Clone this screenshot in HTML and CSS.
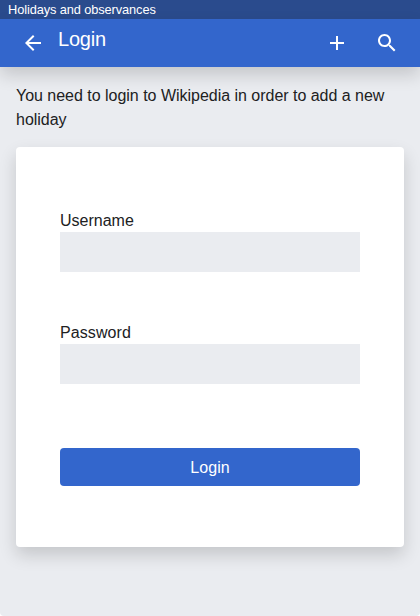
FILE: index.html
```html
<!DOCTYPE html>
<html lang="en">
<head>
<meta charset="utf-8">
<title>Login</title>
<link rel="stylesheet" href="styles.css">
</head>
<body>
<div class="app">
<div class="status-bar">Holidays and observances</div>
<header class="toolbar">
  <button class="icon-button" aria-label="Back"><svg viewBox="0 0 24 24"><path d="M20 11H7.83l5.59-5.59L12 4l-8 8 8 8 1.41-1.41L7.83 13H20v-2z"/></svg></button>
  <h1 class="title">Login</h1>
  <button class="icon-button add" aria-label="Add"><svg viewBox="0 0 24 24"><path d="M19 13h-6v6h-2v-6H5v-2h6V5h2v6h6v2z"/></svg></button>
  <button class="icon-button" aria-label="Search"><svg viewBox="0 0 24 24"><path d="M15.5 14h-.79l-.28-.27C15.41 12.59 16 11.11 16 9.5 16 5.91 13.09 3 9.5 3S3 5.91 3 9.5 5.91 16 9.5 16c1.61 0 3.09-.59 4.23-1.57l.27.28v.79l5 4.99L20.49 19l-4.99-5zm-6 0C7.01 14 5 11.99 5 9.5S7.01 5 9.5 5 14 7.01 14 9.5 11.99 14 9.5 14z"/></svg></button>
</header>
<main class="content">
  <p class="notice">You need to login to Wikipedia in order to add a new holiday</p>
  <form class="card">
    <label class="field">Username<input class="input" type="text"></label>
    <label class="field field-password">Password<input class="input" type="password"></label>
    <button class="submit" type="button">Login</button>
  </form>
</main>
</div>
</body>
</html>
```
FILE: styles.css
```css
* { box-sizing: border-box; }
body {
  margin: 0;
  background: #fff;
}
html { background: #fff; }
.app {
  height: 616px;
  overflow: hidden;
  background: #eaecf0;
  border-radius: 0 0 4px 4px;
  color: #202122;
  font: 16px/24px "Liberation Sans", Arial, sans-serif;
}
button { border: 0; font: inherit; color: #fff; }
.status-bar {
  height: 19px;
  padding-left: 8px;
  background: #2a4b8d;
  color: #fff;
  font-size: 12.8px;
  letter-spacing: -0.1px;
  line-height: 19px;
}
.toolbar {
  display: flex;
  align-items: center;
  height: 48px;
  padding: 0 21px;
  background: #36c;
  box-shadow: 0 8px 17px 0 rgba(0,0,0,.16);
}
.icon-button { width: 24px; height: 24px; padding: 0; background: none; }
.icon-button svg { display: block; width: 24px; height: 24px; fill: #fff; }
.title {
  flex: 1;
  margin: 0 0 8px 13px;
  color: #fff;
  font-size: 20px;
  letter-spacing: -0.2px;
  font-weight: 400;
  line-height: 24px;
}
.add { margin-right: 26px; }
.content { padding: 17px 16px; }
.notice { margin: 0 0 15px; letter-spacing: -0.02px; }
.card {
  display: flex;
  flex-direction: column;
  height: 400px;
  padding: 62px 44px 0;
  background: #fff;
  border-radius: 4px;
  box-shadow: 0 8px 17px 0 rgba(0,0,0,.16);
}
.field { display: block; height: 63px; margin-bottom: 49px; }
.field-password { letter-spacing: 0.08px; }
.input {
  display: block;
  width: 100%;
  height: 40px;
  margin-top: -1px;
  padding: 0 8px;
  border: 0;
  background: #eaecf0;
}
.submit {
  height: 38px;
  margin-top: 15px;
  padding: 2px 0 0;
  border-radius: 4px;
  background: #36c;
  letter-spacing: 0.1px;
}
```
